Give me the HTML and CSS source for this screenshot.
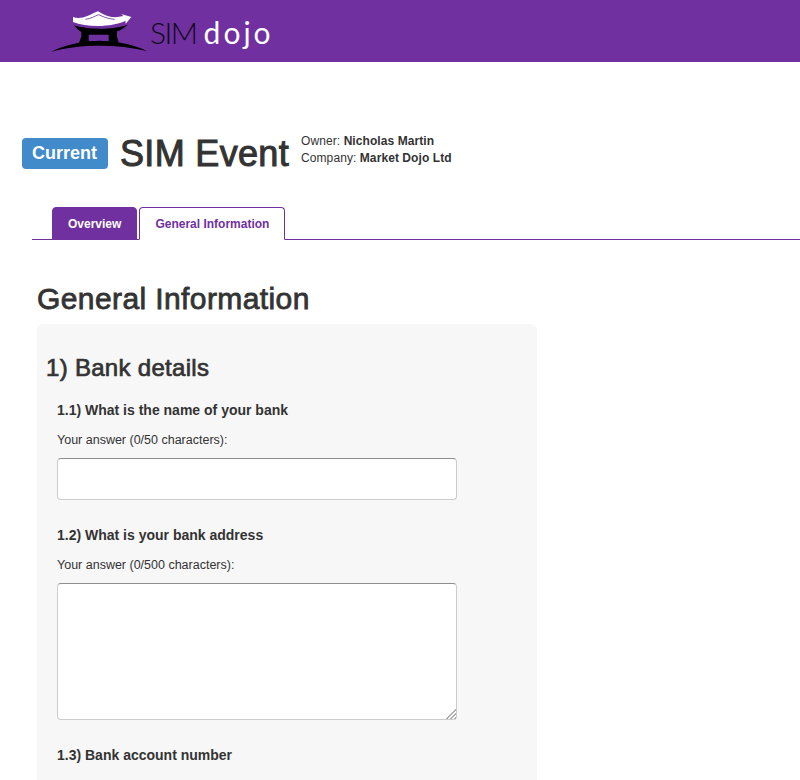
FILE: index.html
```html
<!DOCTYPE html>
<html lang="en">
<head>
    <meta charset="UTF-8">
    <meta name="viewport" content="width=device-width, initial-scale=1.0">
    <title>SIM Dojo - SIM Event</title>
    <link rel="stylesheet" href="styles.css">
</head>
<body>
    <header class="topbar">
        <div class="logo">
            <svg class="logo-mark" width="104" height="46" viewBox="0 0 312 138">
                <path d="M10 131 C45 112 95 100 155 98 C215 100 265 112 297 129 C250 118 205 113 155 113 C105 113 55 118 10 131 Z" fill="#000"/>
                <path d="M78 52 C120 66 195 66 240 50 C225 62 215 68 207 70 L207 85 L213 108 L92 108 L100 85 L100 72 C92 68 84 60 78 52 Z M122 80 L122 100 L182 100 L182 80 Z" fill="#000" fill-rule="evenodd"/>
                <path d="M75 27 C88 32 104 30 118 24 C128 21 136 14 150 10 C162 16 172 25 192 27 C204 28 214 27 226 24 L220 18 L250 27 L233 47 L232 38 C200 56 120 60 75 42 Z" fill="#fff"/>
                <path d="M112 34 C130 32 140 24 152 20 C165 26 180 33 200 34" fill="none" stroke="#7030a0" stroke-width="2.5"/>
            </svg>
            <div class="logo-text">
                <span class="logo-sim">SIM</span><span class="logo-dojo">dojo</span>
            </div>
        </div>
    </header>

    <section class="event-head">
        <span class="status-badge">Current</span>
        <h1>SIM Event</h1>
        <div class="event-meta">
            <div>Owner: <strong>Nicholas Martin</strong></div>
            <div>Company: <strong>Market Dojo Ltd</strong></div>
        </div>
    </section>

    <nav class="tabs">
        <a href="#" class="tab tab-filled">Overview</a>
        <a href="#" class="tab tab-active">General Information</a>
    </nav>

    <main class="content">
        <h2>General Information</h2>
        <div class="panel">
            <h3>1) Bank details</h3>

            <div class="question">
                <h4>1.1) What is the name of your bank</h4>
                <label for="bankName">Your answer (0/50 characters):</label>
                <input type="text" id="bankName" class="answer">
            </div>

            <div class="question">
                <h4>1.2) What is your bank address</h4>
                <label for="bankAddress">Your answer (0/500 characters):</label>
                <textarea id="bankAddress" class="answer answer-long"></textarea>
            </div>

            <div class="question">
                <h4>1.3) Bank account number</h4>
                <label for="bankAccount">Your answer (0/9 characters):</label>
                <input type="text" id="bankAccount" class="answer">
            </div>
        </div>
    </main>
</body>
</html>
```

FILE: styles.css
```css
/* styles.css */
html {
    height: 780px;
    overflow: hidden;
}

body {
    font-family: "Liberation Sans", Arial, sans-serif;
    color: #333;
    background-color: #fff;
    margin: 0;
    font-size: 12px;
    line-height: 17px;
}

.topbar {
    background-color: #7030a0;
    height: 62px;
}

.logo {
    display: flex;
    align-items: center;
    height: 62px;
    padding-left: 48px;
    box-sizing: border-box;
}

.logo-text {
    display: flex;
    align-items: baseline;
    margin-left: -2px;
    margin-top: 2px;
}

.logo-sim {
    font-family: Lato, sans-serif;
    font-weight: 300;
    font-size: 30px;
    letter-spacing: -1.5px;
    color: #0d0716;
}

.logo-dojo {
    font-family: Lato, sans-serif;
    font-weight: 400;
    font-size: 30px;
    letter-spacing: 3px;
    color: #fff;
    margin-left: 7px;
}

.event-head {
    display: flex;
    align-items: flex-start;
    margin-top: 70px;
    padding-left: 22px;
    height: 75px;
}

.status-badge {
    background-color: #428bca;
    color: #fff;
    font-size: 18px;
    font-weight: bold;
    line-height: 31px;
    height: 31px;
    padding: 0 11px 0 10px;
    border-radius: 4px;
    margin-top: 6px;
}

h1 {
    font-size: 36px;
    font-weight: normal;
    letter-spacing: 0.33px;
    -webkit-text-stroke: 1px #333;
    line-height: 40px;
    margin: 2px 0 0 12px;
}

.event-meta {
    margin-left: 12px;
    margin-top: 1px;
    letter-spacing: 0.08px;
}

.tabs {
    display: flex;
    gap: 2px;
    margin-left: 32px;
    padding-left: 20px;
    border-bottom: 1px solid #7030a0;
    height: 32px;
}

.tab {
    display: block;
    height: 33px;
    box-sizing: border-box;
    padding: 0 15px;
    line-height: 32px;
    font-weight: bold;
    text-decoration: none;
    border-radius: 4px 4px 0 0;
    border: 1px solid #7030a0;
}

.tab-filled {
    background-color: #7030a0;
    color: #fff;
}

.tab-active {
    background-color: #fff;
    color: #7030a0;
    border-bottom-color: #fff;
}

.content {
    padding: 0 0 0 37px;
}

h2 {
    font-size: 30px;
    font-weight: normal;
    letter-spacing: 0.4px;
    -webkit-text-stroke: 0.8px #333;
    line-height: 33px;
    margin: 42px 0 9px;
}

.panel {
    background-color: #f7f7f7;
    border-radius: 6px;
    width: 500px;
    box-sizing: border-box;
    padding: 31px 10px 20px;
}

h3 {
    font-size: 24px;
    font-weight: normal;
    letter-spacing: 0.3px;
    -webkit-text-stroke: 0.7px #333;
    line-height: 26px;
    margin: 0 0 21px -1px;
}

.question {
    padding-left: 10px;
    margin-bottom: 27px;
}

h4 {
    font-size: 14px;
    font-weight: bold;
    line-height: 16px;
    margin: 0 0 14px;
}

label {
    display: block;
    font-size: 12.5px;
    line-height: 17px;
    margin-bottom: 9px;
}

.answer {
    display: block;
    width: 400px;
    height: 42px;
    box-sizing: border-box;
    padding: 6px 12px;
    background-color: #fff;
    border: 1px solid #ccc;
    border-top-color: #8e8e8e;
    border-radius: 4px;
}

.answer-long {
    height: 137px;
    resize: vertical;
}

.answer-long::-webkit-resizer {
    background:
        linear-gradient(135deg, #fff 60%, transparent 60%),
        repeating-linear-gradient(135deg, transparent 0, transparent 1.5px, #aaa 1.5px, #aaa 3px);
}
```
